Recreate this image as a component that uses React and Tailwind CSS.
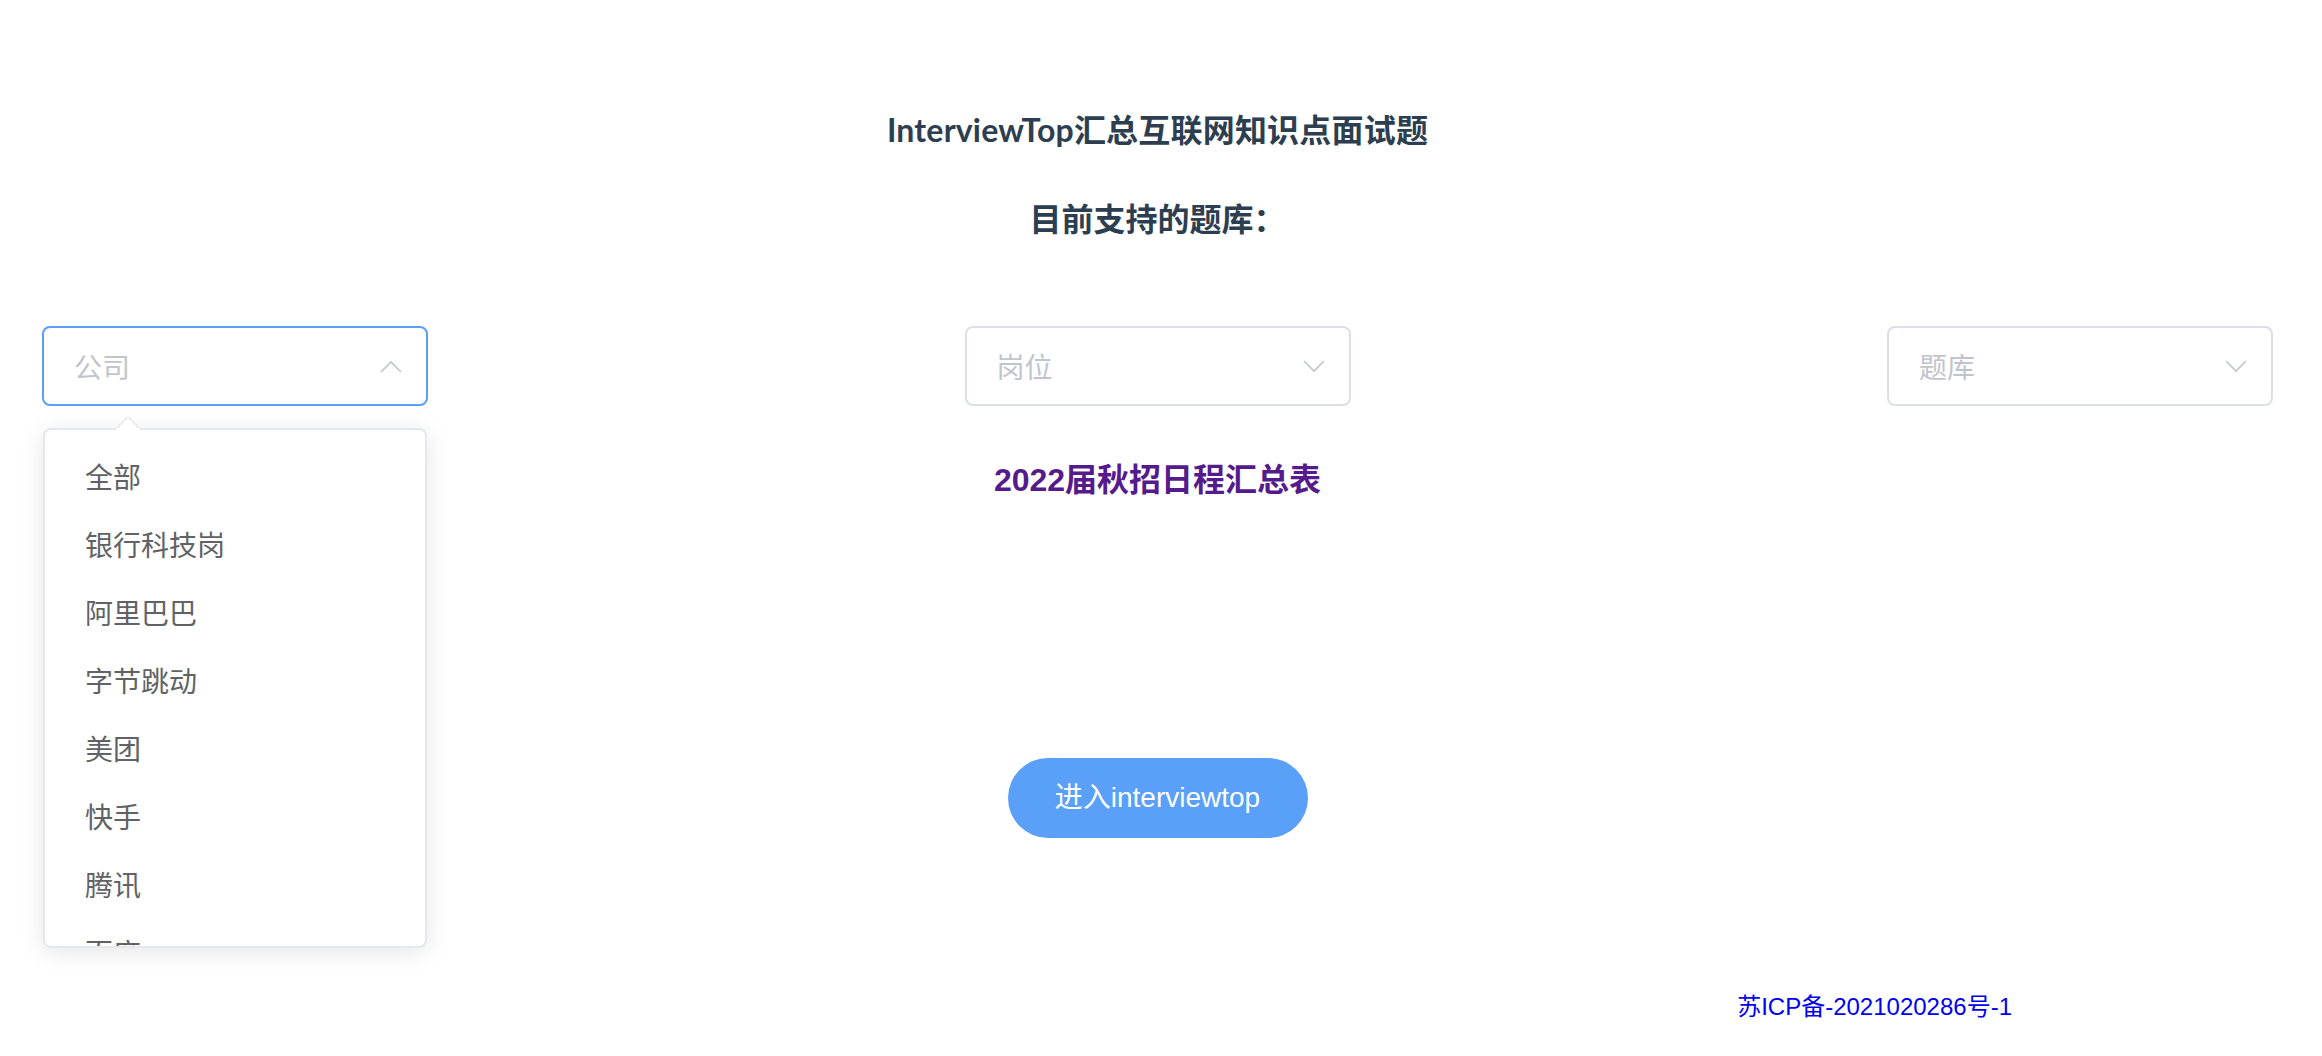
import React from "react";

const CJK = '"Noto Sans CJK SC", sans-serif';

function Chevron({ up }) {
  return (
    <svg width="22" height="13" viewBox="0 0 22 13" fill="none">
      <polyline
        points={up ? "1,12 11,2 21,12" : "1,1 11,11 21,1"}
        stroke="#c0c4cc"
        strokeWidth="1.6"
        strokeLinejoin="miter"
      />
    </svg>
  );
}

function SelectBox({ label, focused, up }) {
  return (
    <div
      className={
        "w-[386px] h-[80px] rounded-[8px] border-2 bg-white flex items-center justify-between pl-[30px] pr-[24px] " +
        (focused ? "border-[#5a9ff8]" : "border-[#dcdfe6]")
      }
    >
      <span className="text-[28px] leading-[40px] text-[#c0c4cc]" style={{ fontFamily: CJK }}>
        {label}
      </span>
      <Chevron up={up} />
    </div>
  );
}

const items = ["全部", "银行科技岗", "阿里巴巴", "字节跳动", "美团", "快手", "腾讯", "百度"];

export default function App() {
  return (
    <div className="w-[2322px] h-[1056px] bg-white overflow-hidden">
      <div className="pl-[42px] pr-[49px] pt-[108px] flex flex-col items-center">
        <h1
          className="text-[32px] leading-[44px] font-bold text-[#2c3e50] tracking-[0.2px]"
          style={{ fontFamily: 'Lato, "Noto Sans CJK SC", sans-serif' }}
        >
          InterviewTop汇总互联网知识点面试题
        </h1>
        <h2
          className="mt-[45px] text-[32px] leading-[44px] font-bold text-[#2c3e50]"
          style={{ fontFamily: 'Lato, "Noto Sans CJK SC", sans-serif' }}
        >
          目前支持的题库：
        </h2>

        <div className="mt-[85px] w-full flex justify-between">
          <div className="relative">
            <SelectBox label="公司" focused up />
            <div className="absolute left-[1px] top-[102px] w-[384px] z-10">
              <div className="h-[520px] rounded-[8px] border-2 border-[#e4e7ed] bg-white overflow-hidden shadow-[0_4px_24px_rgba(0,0,0,0.1)] pt-[12px]">
                {items.map((it) => (
                  <div
                    key={it}
                    className="h-[68px] leading-[68px] px-[40px] text-[28px] text-[#606266]"
                    style={{ fontFamily: CJK }}
                  >
                    {it}
                  </div>
                ))}
              </div>
              <svg className="absolute left-[72px] top-[-11px]" width="26" height="14" viewBox="0 0 26 14">
                <polygon points="0,13 13,0 26,13" fill="#ffffff" />
                <polyline points="0,13 13,0 26,13" fill="none" stroke="#e4e7ed" strokeWidth="1.6" />
                <rect x="1" y="11" width="24" height="3" fill="#ffffff" />
              </svg>
            </div>
          </div>
          <SelectBox label="岗位" />
          <SelectBox label="题库" />
        </div>

        <a
          href="#"
          className="mt-[52px] text-[32px] leading-[44px] font-bold text-[#551a8b] no-underline"
          style={{ fontFamily: '"Liberation Sans", "Noto Sans CJK SC", sans-serif' }}
        >
          2022届秋招日程汇总表
        </a>

        <button
          className="mt-[256px] w-[300px] h-[80px] rounded-full bg-[#5a9ff8] text-white text-[28px] leading-[40px] flex items-center justify-center"
          style={{ fontFamily: '"Liberation Sans", "Noto Sans CJK SC", sans-serif' }}
        >
          进入interviewtop
        </button>

        <div className="mt-[153px] w-full flex justify-end pr-[261px]">
          <a
            href="#"
            className="text-[24px] leading-[32px] text-[#0000ee] no-underline"
            style={{ fontFamily: '"Liberation Sans", "Noto Sans CJK SC", sans-serif' }}
          >
            苏ICP备-2021020286号-1
          </a>
        </div>
      </div>
    </div>
  );
}
